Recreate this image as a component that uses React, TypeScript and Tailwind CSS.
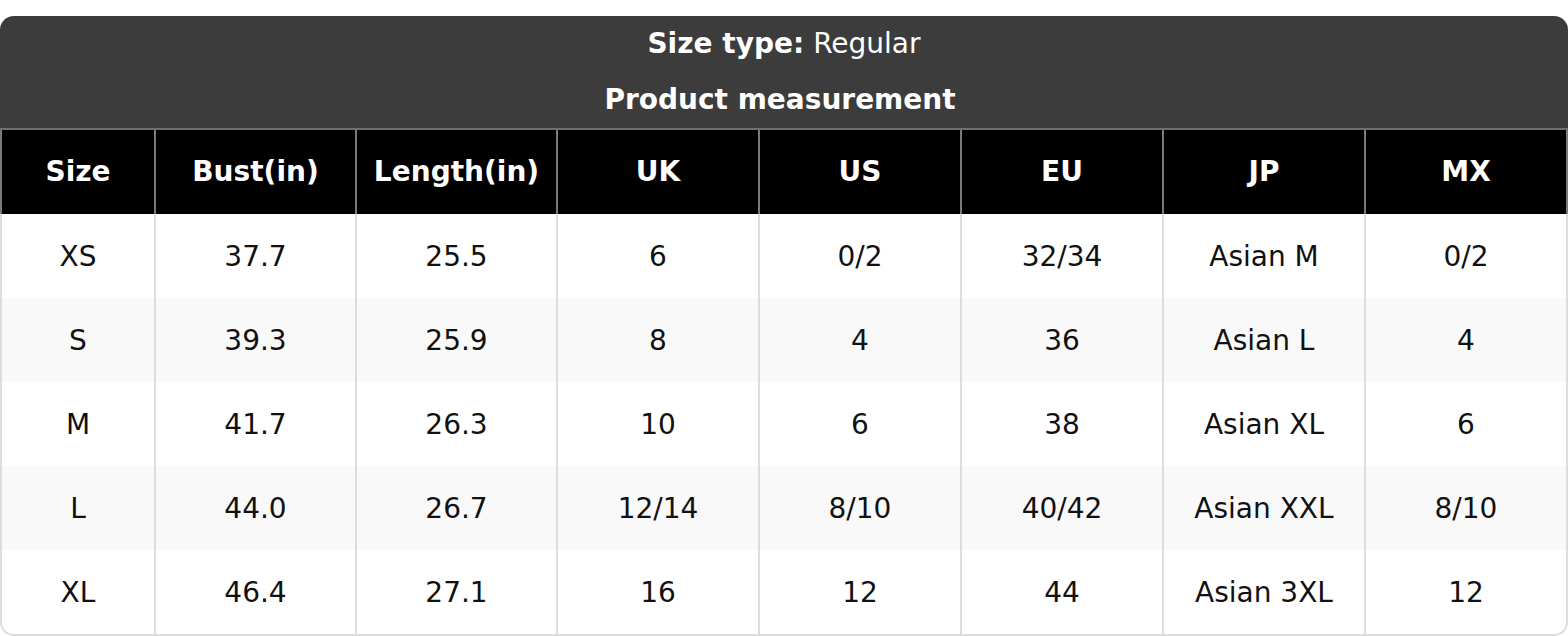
import React from 'react';

const headers = ['Size', 'Bust(in)', 'Length(in)', 'UK', 'US', 'EU', 'JP', 'MX'];

const rows: string[][] = [
  ['XS', '37.7', '25.5', '6', '0/2', '32/34', 'Asian M', '0/2'],
  ['S', '39.3', '25.9', '8', '4', '36', 'Asian L', '4'],
  ['M', '41.7', '26.3', '10', '6', '38', 'Asian XL', '6'],
  ['L', '44.0', '26.7', '12/14', '8/10', '40/42', 'Asian XXL', '8/10'],
  ['XL', '46.4', '27.1', '16', '12', '44', 'Asian 3XL', '12'],
];

export default function App() {
  return (
    <div
      className="w-[1568px] h-[636px] bg-white pt-4 text-[28px]"
      style={{ fontFamily: '"DejaVu Sans", "Liberation Sans", sans-serif' }}
    >
      {/* title block */}
      <div className="bg-[#3c3c3c] rounded-t-[14px] h-[112px] flex flex-col text-white">
        <div className="h-[56px] flex items-center justify-center">
          <span className="font-bold">Size type:</span>
          <span className="ml-[9px]">Regular</span>
        </div>
        <div className="h-[56px] flex items-center justify-center pr-[8px] font-bold">
          Product measurement
        </div>
      </div>

      {/* column headers */}
      <div className="grid grid-cols-[156px_201px_201px_202px_202px_202px_202px_202px] bg-black border-t-2 border-[#6e6e6e]">
        {headers.map((h, i) => (
          <div
            key={h}
            className={`h-[84px] flex items-center justify-center font-bold text-white border-r-2 border-[#7a7a7a] ${
              i === 0 ? 'border-l-2' : ''
            }`}
          >
            {h}
          </div>
        ))}
      </div>

      {/* body */}
      <div className="border-x-2 border-b-2 border-[#dddddd] rounded-b-[14px] overflow-hidden">
        {rows.map((row, r) => (
          <div
            key={r}
            className={`grid grid-cols-[154px_201px_201px_202px_202px_202px_202px_200px] ${
              r % 2 === 1 ? 'bg-[#f9f9f9]' : 'bg-white'
            }`}
          >
            {row.map((cell, c) => (
              <div
                key={c}
                className={`h-[84px] flex items-center justify-center pt-[1px] text-[#111111] ${
                  c < row.length - 1 ? 'border-r-2 border-[#dddddd]' : ''
                }`}
              >
                {cell}
              </div>
            ))}
          </div>
        ))}
      </div>
    </div>
  );
}
